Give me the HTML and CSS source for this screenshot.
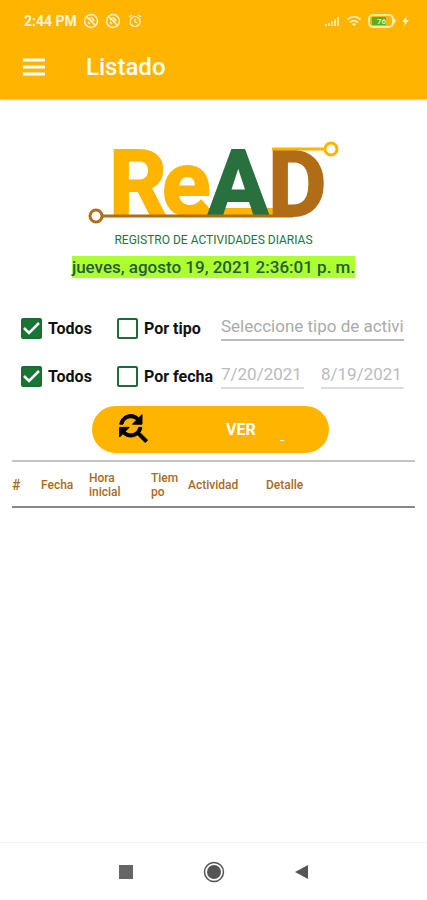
FILE: index.html
```
<!DOCTYPE html>
<html lang="es">
<head>
    <meta charset="UTF-8">
    <meta name="viewport" content="width=device-width, initial-scale=1.0">
    <title>Listado</title>
    <link rel="stylesheet" href="styles.css">
</head>
<body>

<header class="header">
    <div class="status">
        <span class="time">2:44 PM</span>
        <svg class="status-icon" width="16" height="16" viewBox="0 0 16 16" fill="none" stroke="currentColor" stroke-width="1.4">
            <circle cx="8" cy="8" r="6.5"/>
            <path d="M4 4l8 8M5 7c2-3 5-3 6 1M5 9l2 2M8 7l2 2"/>
        </svg>
        <svg class="status-icon" width="16" height="16" viewBox="0 0 16 16" fill="none" stroke="currentColor" stroke-width="1.4">
            <circle cx="8" cy="8" r="6.5"/>
            <path d="M4 4l8 8M5 7c2-3 5-3 6 1M5 9l2 2M8 7l2 2"/>
        </svg>
        <svg class="status-icon" width="16" height="16" viewBox="0 0 16 16" fill="none" stroke="currentColor" stroke-width="1.2">
            <circle cx="8" cy="8.5" r="5"/>
            <path d="M8 5.5v3l2 1.5M2 4l3-2M14 4l-3-2"/>
        </svg>
        <div class="status-right">
            <svg width="16" height="12" viewBox="0 0 16 12" fill="currentColor">
                <path d="M1 9h2v2H1zM4 8h2v3H4zM7 6h2v5H7zM10 4h2v7h-2zM13 2h2v9h-2z" opacity=".8"/>
            </svg>
            <svg width="16" height="12" viewBox="0 0 16 12" fill="none" stroke="currentColor" stroke-width="2">
                <path d="M1.5 4.5c4-3.700 9-3.700 13 0M4 7.500c2.500-2.200 5.500-2.200 8 0" opacity=".8"/>
                <path d="M6 9q2-1.500 4 0l-2 2z" fill="currentColor" stroke="none"/>
            </svg>
            <svg width="28" height="14" viewBox="0 0 28 14">
                <rect x="1" y="1" width="24" height="12" rx="4" fill="none" stroke="#ffe9ae" stroke-width="2"/>
                <path d="M26 4l2 3-2 3z" fill="#ffe9ae"/>
                <rect x="4" y="3" width="14" height="8" rx="1" fill="#55b01c"/>
                <text class="battery-text" x="9" y="10">76</text>
            </svg>
            <svg width="7" height="12" viewBox="0 0 7 12" fill="currentColor">
                <path d="M5 1L0 7h3l-1 4 5-6H4z"/>
            </svg>
        </div>
    </div>
    <div class="toolbar">
        <button class="menu" aria-label="Menú">
            <svg width="24" height="18" viewBox="0 0 24 18" stroke="currentColor" stroke-width="3">
                <path d="M1 2h22M1 9h22M1 16h22"/>
            </svg>
        </button>
        <h1 class="title">Listado</h1>
    </div>
</header>

<main class="main">
    <svg width="254" height="120" viewBox="0 -16 254 120" role="img" aria-label="ReAD">
        <path d="M96 69h90v8H96z" fill="#ffb400"/>
        <g class="logo-text">
            <text x="22" y="76" fill="#ffb400" stroke="#ffb400">R</text>
            <text x="75" y="76" fill="#ffb400" stroke="#ffb400">e</text>
            <text x="121" y="76" fill="#28713e" stroke="#28713e">A</text>
            <text x="181" y="77" fill="#b16d16" stroke="#b16d16">D</text>
        </g>
        <path d="M185 10h53" fill="none" stroke="#ffb400" stroke-width="3"/>
        <circle cx="244" cy="10" r="6" fill="#fff" stroke="#ffb400" stroke-width="3"/>
        <path d="M15 77h191" fill="none" stroke="#b16d16" stroke-width="3"/>
        <circle cx="9" cy="77" r="6" fill="#fff" stroke="#b16d16" stroke-width="3"/>
    </svg>
    <p class="subtitle">REGISTRO DE ACTIVIDADES DIARIAS</p>
    <time class="date">jueves, agosto 19, 2021 2:36:01 p. m.</time>

    <form class="filters">
        <label class="check"><input type="checkbox" checked>Todos</label>
        <label class="check"><input type="checkbox">Por tipo</label>
        <div class="fields">
            <input class="field" type="text" placeholder="Seleccione tipo de actividad" aria-label="Tipo de actividad">
        </div>

        <label class="check"><input type="checkbox" checked>Todos</label>
        <label class="check"><input type="checkbox">Por fecha</label>
        <div class="fields">
            <input class="field field-date" type="text" value="7/20/2021" aria-label="Desde" disabled>
            <input class="field field-date" type="text" value="8/19/2021" aria-label="Hasta" disabled>
        </div>
    </form>

    <button class="ver">
        <svg width="32" height="32" viewBox="3 3 20 20" stroke="#000" stroke-width=".6">
            <path d="M11 6c1.380 0 2.630.56 3.540 1.460L12 10h6V4l-2.050 2.050C14.680 4.780 12.930 4 11 4c-3.530 0-6.430 2.610-6.920 6H6.100c.46-2.280 2.480-4 4.900-4zm5.640 9.140c.66-.9 1.120-1.970 1.280-3.140H15.900c-.46 2.280-2.480 4-4.900 4-1.380 0-2.630-.56-3.540-1.460L10 12H4v6l2.050-2.050C7.320 17.220 9.070 18 11 18c1.550 0 2.980-.51 4.140-1.360L20 21.490 21.490 20l-4.850-4.860z"/>
        </svg>
        <span class="ver-text">VER</span>
        <span class="ver-mark"></span>
    </button>

    <table class="table">
        <colgroup>
            <col class="col-num">
            <col class="col-fecha">
            <col class="col-hora">
            <col class="col-tiempo">
            <col class="col-actividad">
            <col>
        </colgroup>
        <thead>
            <tr>
                <th class="num">#</th>
                <th>Fecha</th>
                <th>Hora<br>inicial</th>
                <th>Tiem<br>po</th>
                <th>Actividad</th>
                <th>Detalle</th>
            </tr>
        </thead>
    </table>
</main>

<nav class="nav">
    <button class="nav-button" aria-label="Recientes">
        <svg width="22" height="22" viewBox="0 0 22 22"><path d="M4 4h14v14H4z" fill="#666"/></svg>
    </button>
    <button class="nav-button" aria-label="Inicio">
        <svg width="22" height="22" viewBox="0 0 22 22">
            <circle cx="11" cy="11" r="9.5" fill="none" stroke="#555" stroke-width="1.5"/>
            <circle cx="11" cy="11" r="7" fill="#555"/>
        </svg>
    </button>
    <button class="nav-button" aria-label="Atrás">
        <svg width="22" height="22" viewBox="0 0 22 22"><path d="M17 4v14L4 11z" fill="#555"/></svg>
    </button>
</nav>

</body>
</html>
```
FILE: styles.css
```
* {
    box-sizing: border-box;
}

body {
    display: flex;
    flex-direction: column;
    min-height: 100vh;
    margin: 0;
    font-family: Roboto, sans-serif;
    background: #fff;
}

button {
    padding: 0;
    border: 0;
    background: none;
    color: inherit;
    font-family: inherit;
}

svg {
    display: block;
}

/* Header */
.header {
    padding: 12px 18px 12px 24px;
    background: #ffb400;
    color: #fff;
    box-shadow: 0 1px 2px #ccc;
}

.status {
    display: flex;
    align-items: center;
    height: 18px;
    color: #fff3d0;
}

.time {
    margin-right: 6px;
    font-size: 14px;
    font-weight: 700;
}

.status-icon {
    margin-right: 6px;
}

.status-right {
    display: flex;
    align-items: center;
    gap: 6px;
    margin-left: auto;
}

.battery-text {
    font-size: 8px;
    font-weight: 700;
    fill: #e2f6c0;
}

.toolbar {
    display: flex;
    align-items: center;
    gap: 40px;
    margin-left: -2px;
    padding: 21px 0 4px;
}

.title {
    margin: 0;
    font-size: 24px;
    font-weight: 500;
    line-height: 32px;
}

/* Content */
.main {
    display: flex;
    flex: 1;
    flex-direction: column;
    align-items: center;
    padding: 24px 12px 0;
}

.logo-text {
    font-size: 90px;
    font-weight: 700;
    stroke-width: 2px;
}

.subtitle {
    margin: -11px 0 8px;
    color: #28713e;
    font-size: 12px;
    font-weight: 400;
    line-height: 16px;
}

.date {
    background: #adff2f;
    color: #245c3a;
    font-size: 17px;
    font-weight: 500;
    line-height: 22px;
}

.filters {
    display: grid;
    grid-template-columns: 96px 104px 1fr;
    row-gap: 20px;
    width: 100%;
    margin-top: 36px;
    padding: 0 11px 0 9px;
}

.check {
    display: flex;
    align-items: center;
    gap: 6px;
    height: 28px;
    color: #111;
    font-size: 16px;
    font-weight: 700;
    white-space: nowrap;
}

.check input {
    flex: none;
    width: 21px;
    height: 21px;
    margin: 0;
    appearance: none;
    border: 2px solid #1f6b34;
    border-radius: 2px;
}

.check input:checked {
    background: #1a7436 url("data:image/svg+xml,%3Csvg xmlns='http://www.w3.org/2000/svg' viewBox='0 0 17 17'%3E%3Cpath d='M1 8l5 5 10-10' fill='none' stroke='white' stroke-width='2.5'/%3E%3C/svg%3E") center / 17px no-repeat;
}

.fields {
    display: flex;
    gap: 17px;
    min-width: 0;
}

.field {
    flex: 1;
    width: 0;
    height: 27px;
    padding: 0 0 2px;
    border: 0;
    border-bottom: 2px solid #bbb;
    border-radius: 0;
    background: none;
    color: #aaa;
    font-family: inherit;
    font-size: 17px;
}

.field::placeholder {
    color: #aaa;
}

.field-date {
    border-color: #ddd;
    color: #bbb;
}

.ver {
    display: flex;
    align-items: center;
    width: 237px;
    max-width: 100%;
    margin: 16px 6px 0 0;
    padding: 7px 26px 8px;
    border-radius: 24px;
    background: #ffb400;
    color: #fff;
}

.ver-text {
    margin-left: 76px;
    font-size: 16px;
    font-weight: 700;
}

.ver-mark {
    align-self: flex-end;
    width: 4px;
    height: 1px;
    margin: 0 0 4px 24px;
    background: #fff;
}

.table {
    width: 100%;
    margin-top: 7px;
    border-top: 2px solid #c4c4c4;
    border-bottom: 2px solid #888;
    border-collapse: collapse;
    table-layout: fixed;
}

.table th {
    height: 46px;
    padding: 2px 0 0;
    color: #aa6a1c;
    font-size: 12px;
    font-weight: 500;
    line-height: 14px;
    text-align: left;
}

.table .num {
    font-size: 14px;
}

.col-num {
    width: 29px;
}

.col-fecha {
    width: 48px;
}

.col-hora {
    width: 62px;
}

.col-tiempo {
    width: 37px;
}

.col-actividad {
    width: 78px;
}

/* Bottom bar */
.nav {
    display: flex;
    justify-content: center;
    gap: 66px;
    padding: 18px 0 17px;
    border-top: 1px solid #f2f2f2;
}
```
